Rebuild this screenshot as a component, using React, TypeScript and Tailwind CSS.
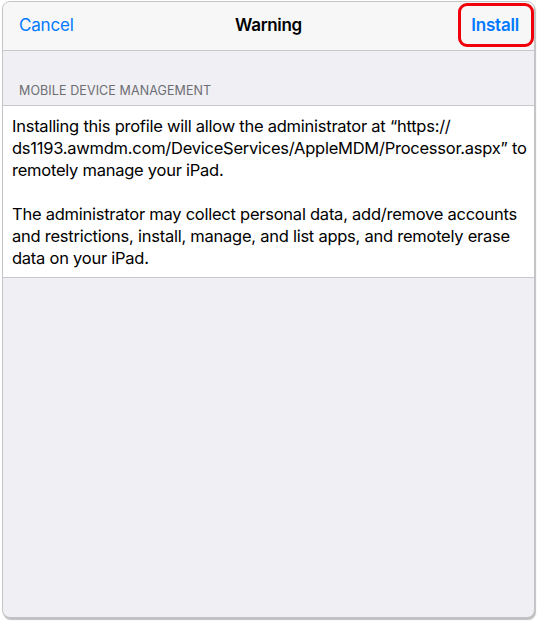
import React from "react";

const font = { fontFamily: '"Inter", "Noto Sans", sans-serif' };

export default function App() {
  return (
    <div className="w-[537px] h-[621px] bg-white pt-[1px] pl-[2px]" style={font}>
      <div className="w-[533px] h-[617px] rounded-[8px] border border-[#c4c4c8] overflow-hidden bg-[#efeff4] flex flex-col shadow-[1px_2px_1px_rgba(0,0,0,0.25)]">
        {/* Nav bar */}
        <div className="relative h-[49px] shrink-0 bg-[#f7f7f8] border-b border-[#c8c7cc] flex items-center justify-between pl-[16px] pr-[15px]">
          <button className="text-[17px] text-[#007aff] tracking-[-0.2px]">Cancel</button>
          <div className="absolute left-1/2 -translate-x-1/2 text-[17px] font-semibold text-black tracking-[-0.3px]">
            Warning
          </div>
          <button className="text-[17px] font-semibold text-[#007aff] tracking-[-0.2px]">Install</button>
          <div className="absolute right-0 top-[1px] w-[76px] h-[44px] rounded-[9px] border-[3px] border-[#f2000a]" />
        </div>

        {/* Section header */}
        <div className="pt-[31px] pb-[4px] pl-[16px] text-[12.5px] text-[#6d6d72] uppercase tracking-[0.1px]">
          Mobile Device Management
        </div>

        {/* Content */}
        <div className="bg-white border-y border-[#c8c7cc] pl-[9px] pr-[4px] pt-[9px] pb-[8px] text-[16.5px] leading-[22px] text-black tracking-[-0.25px]">
          <p>
            Installing this profile will allow the administrator at “https://
            <br />
            ds1193.awmdm.com/DeviceServices/AppleMDM/Processor.aspx” to
            <br />
            remotely manage your iPad.
          </p>
          <p className="mt-[22px]">
            The administrator may collect personal data, add/remove accounts
            <br />
            and restrictions, install, manage, and list apps, and remotely erase
            <br />
            data on your iPad.
          </p>
        </div>
      </div>
    </div>
  );
}
